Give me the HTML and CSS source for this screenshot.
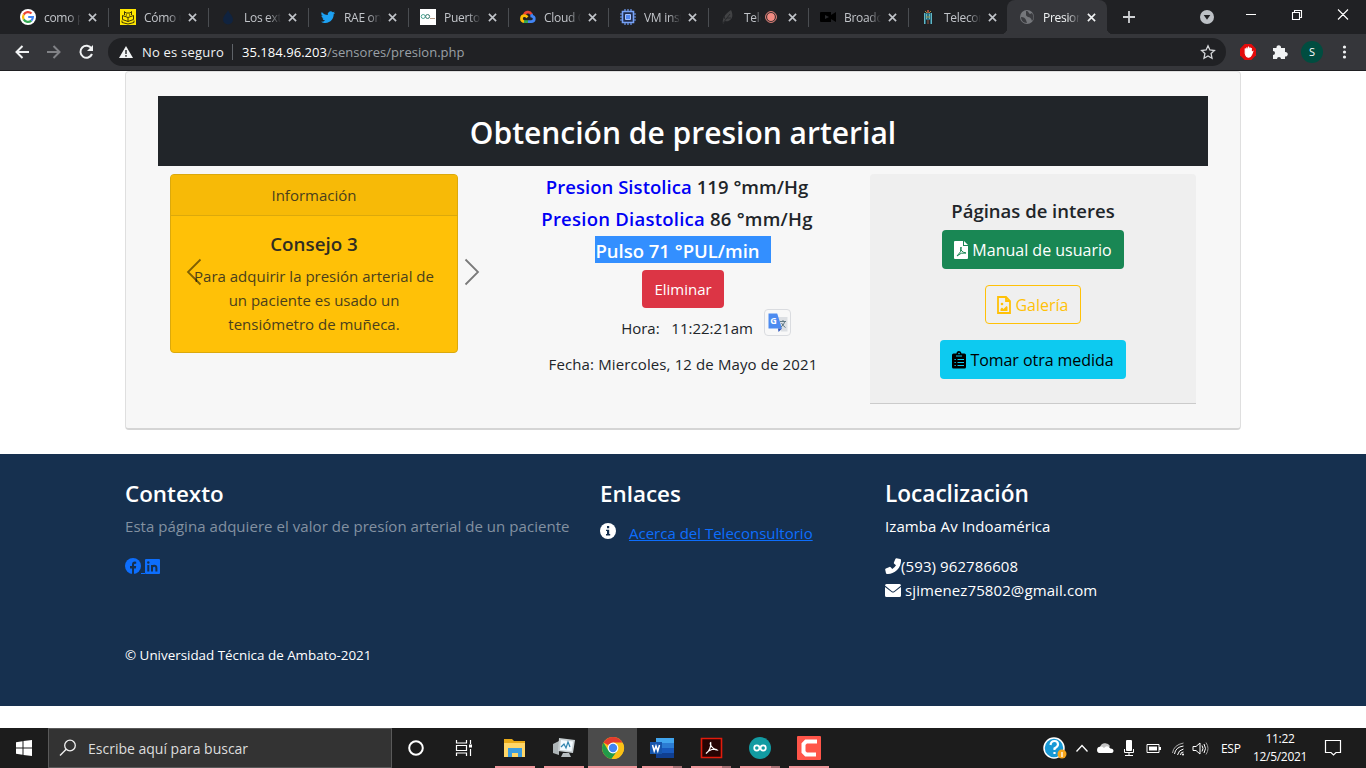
FILE: index.html
```
<!DOCTYPE html>
<html lang="es">
<head>
<meta charset="utf-8">
<title>Presion</title>
<link rel="stylesheet" href="styles.css">
</head>
<body>
<svg class="defs" width="0" height="0">
  <symbol id="x" viewBox="0 0 10 10"><path d="M1 1l8 8M9 1l-8 8" fill="none" stroke="currentColor" stroke-width="1.8"/></symbol>
</svg>
<div class="screen">
<header class="tabs">
  <div class="tab"><svg class="fav" viewBox="0 0 16 16"><circle cx="8" cy="8" r="8" fill="#fff"/><g fill="none" stroke-width="2.2"><path d="M11.5 4.6A4.9 4.9 0 0 0 3.7 5.6" stroke="#ea4335"/><path d="M3.7 5.6a4.9 4.9 0 0 0 0 4.8" stroke="#fbbc05"/><path d="M3.7 10.4a4.9 4.9 0 0 0 7.6 1.2" stroke="#34a853"/><path d="M11.3 11.6A4.9 4.9 0 0 0 12.9 8H8.2" stroke="#4285f4"/></g></svg><span class="label">como p</span><svg class="close"><use href="#x"/></svg></div>
  <div class="tab"><svg class="fav" viewBox="0 0 16 16"><path d="M0 0h16v16H0z" fill="#ffe600"/><path d="M2.500 6.500l5.500 2 5.500-2v4L8 12.500l-5.500-2zM8 8.500v4M2 11.500v2l6 1.500 6-1.500v-2M4.500 6V2.500L6 4h4l1.500-1.500V6M6.300 5.300v1.400M9.700 5.300v1.400" fill="none" stroke="#3a3508" stroke-width="1"/></svg><span class="label">Cómo u</span><svg class="close"><use href="#x"/></svg></div>
  <div class="tab"><svg class="fav" viewBox="0 0 16 16"><path d="M8 1c1 3 5 6 5 9.500a5 5 0 0 1-10 0C3 7 7 4 8 1z" fill="#10233f"/></svg><span class="label">Los ext</span><svg class="close"><use href="#x"/></svg></div>
  <div class="tab"><svg class="fav" viewBox="0 0 24 24"><path d="M22.500 5.600c-.8.400-1.600.6-2.500.7.9-.5 1.600-1.400 1.900-2.400-.8.500-1.800.9-2.800 1.100a4.300 4.300 0 0 0-7.400 4C8.100 8.800 4.900 7.100 2.700 4.400a4.300 4.300 0 0 0 1.400 5.800c-.7 0-1.400-.2-2-.5 0 2.100 1.500 3.900 3.500 4.300-.6.200-1.300.2-2 .1.600 1.700 2.200 2.900 4.100 3A8.700 8.700 0 0 1 1.400 19c1.900 1.200 4.200 1.900 6.700 1.900 8.100 0 12.700-6.800 12.400-12.900.8-.6 1.500-1.400 2-2.400z" fill="#1da1f2"/></svg><span class="label">RAE on</span><svg class="close"><use href="#x"/></svg></div>
  <div class="tab"><svg class="fav" viewBox="0 0 16 16"><path d="M0 0h16v16H0z" fill="#fff"/><circle cx="3.200" cy="7.500" r="2" fill="none" stroke="#4aa593"/><circle cx="7.600" cy="7.500" r="2" fill="none" stroke="#35796c"/><path d="M10 9.500h5" stroke="#b79a83"/></svg><span class="label">Puerto</span><svg class="close"><use href="#x"/></svg></div>
  <div class="tab"><svg class="fav" viewBox="0 0 16 16"><g fill="none" stroke-width="2.800"><path d="M4.300 6.200C5 3 9.500 1.800 11.400 5.300" stroke="#ea4335"/><path d="M11.300 5.200c.6 1 .5 1.400.5 2 3.500.7 3.200 5.400-.6 5.400H8" stroke="#4285f4"/><path d="M8 12.600H3.600" stroke="#34a853"/><path d="M4 12.600c-3.500-.5-3.300-6 .5-5.900 1.500 0 2 .5 3 1.500" stroke="#fbbc05"/></g></svg><span class="label">Cloud C</span><svg class="close"><use href="#x"/></svg></div>
  <div class="tab"><svg class="fav" viewBox="0 0 16 16"><path d="M5 0v16M8 0v16M11 0v16M0 5h16M0 8h16M0 11h16" stroke="#6d99f0" stroke-width="1.200"/><path d="M2.500 2.500h11v11h-11z" fill="#202c4c" stroke="#77a2f7" stroke-width="1.600"/><path d="M5.500 5.500h5v5h-5z" fill="#5286ee" stroke="#a6c3ff"/></svg><span class="label">VM inst</span><svg class="close"><use href="#x"/></svg></div>
  <div class="tab"><svg class="fav" viewBox="0 0 16 16"><path d="M3 15c-1-5 1-9 8-14 2 4 2 8-1 10-2 2-4 1-5 1z" fill="#414244"/><path d="M3 14l7-9M5 10l-1-3M7 9h4" stroke="#28292c"/></svg><span class="label label-short">Tele</span><svg class="rec" viewBox="0 0 12 12"><circle cx="6" cy="6" r="5.400" fill="none" stroke="#f28b82"/><circle cx="6" cy="6" r="3.900" fill="#f28b82"/></svg><svg class="close"><use href="#x"/></svg></div>
  <div class="tab"><svg class="fav" viewBox="0 0 16 16"><path d="M0 4q0-1 1-1h10v3l5-3v10l-5-3v3H1q-1 0-1-1z" fill="#000"/><path d="M5 6l4 2-4 2z" fill="#292a2d"/></svg><span class="label">Broadca</span><svg class="close"><use href="#x"/></svg></div>
  <div class="tab last"><svg class="fav" viewBox="0 0 16 16"><path d="M4 4h8v11h-2v-4H6v4H4z" fill="#2e6f80"/><path d="M4.500 4v11M11.500 4v11M6.500 5v5M9.500 5v5" stroke="#62b7c5"/><path d="M7 1h2v3H7z" fill="#9b4d3b"/><path d="M5 2l2 2M11 2L9 4M6 8h4" stroke="#a5923f"/><path d="M7 11h2v4H7z" fill="#5a3e35"/></svg><span class="label">Telecon</span><svg class="close"><use href="#x"/></svg></div>
  <div class="tab active"><svg class="fav" viewBox="0 0 16 16"><circle cx="8" cy="8" r="7" fill="#75777b"/><path d="M7 2c3 0 2 2 4 3l2-1c2 3 2 6 0 8-1-3-2-4-4-4-1-1-2-1-2-2zM2 8c3 0 4 1 5 3l1 3C4 14 2 11 2 8z" fill="#3b3c40"/></svg><span class="label">Presion</span><svg class="close"><use href="#x"/></svg></div>
  <svg class="plus" viewBox="0 0 12 12"><path d="M6 0v12M0 6h12" stroke="#cfd1d4" stroke-width="1.800"/></svg>
  <svg class="drop" viewBox="0 0 14 14"><circle cx="7" cy="7" r="7" fill="#bdc1c6"/><path d="M3.700 5h6.600L7 9.700z" fill="#202124"/></svg>
  <svg class="winbtns" viewBox="0 0 110 20"><path d="M5 10.500h10M51.500 8.500h7v7h-7zM53.500 8.500v-2h7v7h-2M97 5.500l10 10M107 5.500l-10 10" fill="none" stroke="#fff" stroke-width="1.100"/></svg>
</header>
<div class="toolbar">
  <svg class="nav" viewBox="0 0 100 28"><g fill="none" stroke-width="2"><path d="M29 14H16.500M22.500 8l-6 6 6 6" stroke="#f1f3f4"/><path d="M47 14h12.500M53.500 8l6 6-6 6" stroke="#818286"/><path d="M91.500 10.500a6 6 0 1 0 .5 5.500" stroke="#f1f3f4"/></g><path d="M93 7v6h-6z" fill="#f1f3f4"/></svg>
  <div class="omnibox">
    <svg class="warn" viewBox="0 0 14 12"><path d="M7 0l7 12H0z" fill="#f1f3f4"/><path d="M7 4v4M7 9v1.800" stroke="#202124" stroke-width="1.400"/></svg>
    <span class="unsafe">No es seguro</span><i></i><span class="url"><b>35.184.96.203</b>/sensores/presion.php</span>
    <svg class="star" viewBox="0 0 16 16"><path d="M8 1.800l1.900 4.200 4.500.5-3.300 3.100.9 4.600-4-2.300-4 2.300.9-4.600-3.300-3.100 4.500-.5z" fill="none" stroke="#d5d7da" stroke-width="1.300"/></svg>
  </div>
  <svg class="ext" viewBox="0 0 140 28"><path d="M18.700 6h6.600l4.700 4.700v6.600L25.300 22h-6.600L14 17.300v-6.600z" fill="#e30b0b"/><path d="M19.200 10.500v5q.8 3.800 3.500 3.800 1.800 0 3-2.700l1-2.800-1.400.8V10M20.900 14.500V9.300M22.500 14V8.600M24 14V9.300" fill="#fff" stroke="#fff" stroke-width="1.100"/><path d="M47 10h3.500a2.300 2.300 0 1 1 4.500 0h4v4a2.300 2.300 0 1 1 0 4.500V21h-4a2 2 0 0 0-4 0h-4v-4a2 2 0 0 0 0-4z" fill="#f1f3f4"/><circle cx="86" cy="14" r="11" fill="#004d40"/><text x="86" y="18" text-anchor="middle" fill="#fff" font-size="11">S</text><g fill="#f1f3f4"><circle cx="118.500" cy="9" r="1.600"/><circle cx="118.500" cy="14" r="1.600"/><circle cx="118.500" cy="19" r="1.600"/></g></svg>
</div>

<main class="page">
  <section class="panel">
    <h2>Obtención de presion arterial</h2>
    <div class="row">
      <div class="col carousel">
        <article class="tip">
          <div class="tip-head">Información</div>
          <div class="tip-body"><h5 class="tip-title">Consejo 3</h5><p>Para adquirir la presión arterial de<br>un paciente es usado un<br>tensiómetro de muñeca.</p></div>
        </article>
        <svg class="prev" viewBox="0 0 16 28"><path d="M14.500 1.500L2 14l12.500 12.500" fill="none" stroke="#000" stroke-width="1.800"/></svg>
        <svg class="next" viewBox="0 0 16 28"><path d="M1.500 1.500L14 14 1.500 26.500" fill="none" stroke="#000" stroke-width="1.800"/></svg>
      </div>
      <div class="col readings">
        <h5 class="sis"><span>Presion Sistolica</span> 119 °mm/Hg</h5>
        <h5 class="dia"><span>Presion Diastolica</span> 86 °mm/Hg</h5>
        <h5 class="pul"><mark>Pulso 71 °PUL/min</mark></h5>
        <a class="btn red"><span>Eliminar</span></a>
        <p class="hora">Hora:&nbsp;&nbsp; 11:22:21am</p>
        <p class="fecha">Fecha: Miercoles, 12 de Mayo de 2021</p>
        <div class="gt"><svg viewBox="0 0 20 20"><path d="M9 4h10.500v14.500H13z" fill="#dcdfe3"/><path d="M.5.500h8.700L14 15.500H.5z" fill="#4d8bf0"/><path d="M10 15.500h4l-3.500 3.500z" fill="#2f56be"/><text x="2.300" y="10.500" font-size="9" font-weight="700" fill="#fff">G</text><path d="M12 8.500h6M15 7v1.500M16.800 8.500q-1 4-4 5.500M13.500 10q1.500 3 4 4.500" stroke="#607985" fill="none"/></svg></div>
      </div>
      <div class="col">
        <aside class="links">
          <h5>Páginas de interes</h5>
          <a class="btn green"><svg viewBox="0 0 14 18"><path d="M1 0h8v5h5v12q0 1-1 1H1q-1 0-1-1V1q0-1 1-1zM10 0l4 4h-4z" fill="#fff"/><path d="M3 15q5-4 4-9-1 5 5 6-5-1-9 3z" fill="none" stroke="#198754"/></svg><span>Manual de usuario</span></a>
          <a class="btn outline"><svg viewBox="0 0 14 18"><path d="M1 1h8l4 4v12H1zM9 1v4h4" fill="none" stroke="#ffc107" stroke-width="1.800"/><path d="M3.500 15v-2l1.500-1.500 1.500 1.500L9.500 10l1 1v4z" fill="#ffc107"/><circle cx="5" cy="8" r="1.300" fill="#ffc107"/></svg><span>Galería</span></a>
          <a class="btn cyan"><svg viewBox="0 0 14 18"><path d="M1.500 2.500h3a2.500 2.500 0 0 1 5 0h3Q14 2.500 14 4v12q0 1.500-1.500 1.500h-11Q0 17.500 0 16V4q0-1.500 1.500-1.500z" fill="#000"/><path d="M4 5h6M2.500 8.500h1.300M5.500 8.500H12M2.500 11.500h1.300M5.500 11.500H12M2.500 14.500h1.300M5.500 14.500H12" stroke="#0dcaf0"/><circle cx="7" cy="2.500" r=".8" fill="#0dcaf0"/></svg><span>Tomar otra medida</span></a>
        </aside>
      </div>
    </div>
  </section>
  <footer class="foot">
    <div class="fgrid">
      <div><h4>Contexto</h4><p class="ctx">Esta página adquiere el valor de presíon arterial de un paciente</p>
        <div class="social"><svg viewBox="0 0 16 16"><circle cx="8" cy="8" r="8" fill="#0d6efd"/><path d="M7 16v-5.500H5V8h2V6.500q0-3 2.800-3 .8 0 1.400.2v2H10q-1 0-1 1.100V8h2.200l-.4 2.500H9V16z" fill="#16304f"/></svg><i></i><svg class="in" viewBox="0 0 15 15"><rect width="15" height="15" rx="1" fill="#0d6efd"/><path d="M3.300 6v6.500M7 12.500V6M7 9q0-2.200 2.200-2.200T11.400 9v3.500" fill="none" stroke="#16304f" stroke-width="2"/><circle cx="3.300" cy="3.500" r="1.200" fill="#16304f"/></svg></div></div>
      <div><h4>Enlaces</h4><div class="about"><svg viewBox="0 0 16 16"><circle cx="8" cy="8" r="8" fill="#fff"/><path d="M7 3h2.200v2.200H7zM6 6.700h3.200V11h1v1.400H6V11h1V8H6z" fill="#16304f"/></svg><a>Acerca del Teleconsultorio</a></div></div>
      <div><h4 class="loc">Locaclización</h4><p class="addr">Izamba Av Indoamérica</p>
        <div class="contact"><svg viewBox="0 0 16 16"><path d="M11.500.2l3.700.8q.8.200.8 1A13.500 13.500 0 0 1 2 16q-.8 0-1-.8l-.8-3.500q-.1-.8.6-1.200l3.700-1.600q.7-.2 1.200.3L7.300 11A11 11 0 0 0 11 7.300L9.200 5.700q-.5-.5-.3-1.200L10.500.8q.3-.7 1-.6z" fill="#fff"/></svg><span>(593) 962786608</span></div>
        <div class="contact"><svg class="mail" viewBox="0 0 16 13"><path d="M1.500 0h13Q16 0 16 1.500L9 7.200q-1 .7-2 0L0 1.500Q0 0 1.500 0zM0 3l6.500 5q1.500 1 3 0L16 3v8.500q0 1.500-1.500 1.500h-13Q0 13 0 11.500z" fill="#fff"/></svg><span>sjimenez75802@gmail.com</span></div></div>
    </div>
    <p class="copy">© Universidad Técnica de Ambato-2021</p>
  </footer>
</main>

<nav class="taskbar">
  <div class="start"><svg width="16" height="16" viewBox="0 0 16 16"><path d="M0 2.300L6.500 1.300v6.200H0zM7.500 1.100L16 0v7.500H7.500zM0 8.500h6.500v6.200L0 13.800zM7.500 8.500H16V16l-8.500-1.100z" fill="#fff"/></svg></div>
  <div class="search"><svg width="18" height="18" viewBox="0 0 18 18"><circle cx="11" cy="6.500" r="5.300" fill="none" stroke="#f0f0f0" stroke-width="1.300"/><path d="M7.200 10.300L1 16.500" stroke="#f0f0f0" stroke-width="1.400"/></svg><span>Escribe aquí para buscar</span></div>
  <div class="app narrow"><svg viewBox="0 0 24 24"><circle cx="12" cy="12" r="6.800" fill="none" stroke="#fff" stroke-width="2"/></svg></div>
  <div class="app narrow views"><svg viewBox="0 0 24 24"><path d="M4.500 4v3h10V4M4.500 20v-3h10v3M4.500 9.500h10v5h-10zM18.500 4v4M18.500 13v7" fill="none" stroke="#fff" stroke-width="1.200"/><path d="M17 8.500h3v3h-3z" fill="#fff"/></svg></div>
  <div class="app run"><svg viewBox="0 0 24 24"><path d="M1 3h8l2 2h11v16H1z" fill="#e8a917"/><path d="M1 7h21v14H1z" fill="#ffd667"/><path d="M5 12h14v9h-4v-4H9v4H5z" fill="#3b9cde"/></svg></div>
  <div class="app run"><svg viewBox="0 0 24 24"><path d="M1 8l6-3v14l-6-2z" fill="#aeb5b7"/><path d="M7 2l16 2-2 13-15-2z" fill="#c9d0d3"/><path d="M9 4l12 1.500-1.500 9.500-11.500-1z" fill="#f4fbff"/><path d="M9 11l3-3 2 4 2-6 2 5" fill="none" stroke="#2f83ae" stroke-width="1.200"/><path d="M11 17h6l2 4H9z" fill="#b8bec1"/></svg></div>
  <div class="app run current"><svg viewBox="0 0 24 24"><circle cx="12" cy="12" r="11" fill="#fbc116"/><path d="M12 12L2.500 6.500A11 11 0 0 1 21.500 6.500H12z" fill="#e33b2e"/><path d="M2.500 6.500a11 11 0 0 0 8 16.400L17 14H7z" fill="#229b49"/><path d="M12 7h9.800a11 11 0 0 1-11.300 15.900L17 14z" fill="#fbc116"/><circle cx="12" cy="12" r="5.400" fill="#fff"/><circle cx="12" cy="12" r="4.200" fill="#4285f4"/></svg></div>
  <div class="app run split"><svg viewBox="0 0 24 24"><path d="M6 2h18v6H6z" fill="#41a5ee"/><path d="M6 7h18v5H6z" fill="#2b7cd3"/><path d="M6 12h18v5H6z" fill="#185abd"/><path d="M6 17h18v5H6z" fill="#103f91"/><path d="M0 6h12v12H0z" fill="#1656ad"/><path d="M2.500 9l1.700 6L6 10l1.800 5 1.700-6" fill="none" stroke="#fff" stroke-width="1.500"/></svg></div>
  <div class="app run split"><svg viewBox="0 0 24 24"><path d="M2.500 2.500h20v19h-20z" fill="#260303" stroke="#e11b0c" stroke-width="1.600"/><path d="M7 17.500c3-2 5.500-7 4.700-11-1.700.5 1.300 7 6.300 7.500-2-2-8-.5-11 3.500z" fill="none" stroke="#fff" stroke-width="1.200"/></svg></div>
  <div class="app run split"><svg viewBox="0 0 24 24"><circle cx="12" cy="12" r="11" fill="#129ba2"/><g fill="none" stroke="#fff" stroke-width="1.700"><circle cx="8.800" cy="12" r="2.600"/><circle cx="15.200" cy="12" r="2.600"/></g></svg></div>
  <div class="app run"><svg viewBox="0 0 24 24"><rect width="24" height="24" rx="1" fill="#ff5549"/><path d="M20 5.500H9L6.500 8v8L9 18.500h10" fill="none" stroke="#fff" stroke-width="4"/></svg></div>
  <div class="tray">
    <svg width="176" height="40" viewBox="0 0 176 40"><circle cx="13" cy="20" r="10" fill="#1899d6" stroke="#fff" stroke-width="1.500"/><path d="M9.500 17q.5-4 4-4t3.500 3.500q0 2-3.500 4V22M13.500 24v2" fill="none" stroke="#fff" stroke-width="2.200"/><circle cx="21" cy="26" r="4.500" fill="#f6a51c"/><path d="M21 24v5" stroke="#fff" stroke-width="1.300"/><path d="M35.500 23.500l5.500-6 5.500 6" fill="none" stroke="#fff" stroke-width="1.300"/><g transform="translate(-1)"><path d="M60 19a5.500 5.500 0 0 1 10-1l-4 5z" fill="#c4c4c4"/><path d="M59.500 25a3.200 3.200 0 0 1 .5-6.300q2-.5 4 1.300 3-3.500 6.500.5 3 .3 3 2.500t-2.500 2z" fill="#fff"/></g><g transform="translate(-1)"><rect x="86" y="12" width="6" height="11" rx="1" fill="#fff"/><path d="M84.500 21v3.500h9V21M89 24v3M85 27.500h8" fill="none" stroke="#fff"/></g><g transform="translate(-1)"><path d="M107 16.500h12v8h-12z" fill="none" stroke="#fff"/><path d="M109 18.500h8v4h-8zM119 19h2v3h-2z" fill="#fff"/></g><g transform="translate(-1.500)" fill="none" stroke="#fff"><path d="M133 25q1-8 11-10" stroke="#aaa"/><path d="M135 26q1-7 9-8M138 27q1-5 6-6M141 27q0-3 3-3"/><path d="M153.500 18.500h3l4-3.500v11l-4-3.500h-3zM162.500 17.500q2 3 0 6M164.500 16q3 4.500 0 9"/><path d="M166.500 14.500q4 6 0 12" stroke="#999"/></g><circle cx="142" cy="26.500" r="1" fill="#fff"/></svg>
    <span class="lang">ESP</span>
    <div class="clock"><span>11:22</span><span>12/5/2021</span></div>
    <svg class="note" width="18" height="18" viewBox="0 0 18 18"><path d="M1.500 1.500h15v12H12l-2.500 2.500L7 13.500H1.500z" fill="none" stroke="#fff" stroke-width="1.200"/></svg>
  </div>
</nav>
</div>
</body>
</html>
```
FILE: styles.css
```
* { box-sizing: border-box; }
body { margin: 0; font-family: "Open Sans", "Noto Sans", sans-serif; font-size: 15px; color: #212529; background: #fff; }
h2, h4, h5, p { margin: 0; white-space: nowrap; }
svg { display: block; flex: none; }
.defs { position: absolute; }
.screen { width: 1366px; height: 768px; overflow: hidden; display: flex; flex-direction: column; }

.tabs { height: 34px; background: #202124; display: flex; align-items: center; padding-left: 8px; flex: none; }
.tab { width: 100px; height: 34px; display: flex; align-items: center; padding: 0 11px 0 12px; flex: none; position: relative; color: #c2c5ca; font-size: 12px; letter-spacing: -.3px; }
.tab::after { content: ""; position: absolute; right: -1px; top: 8px; height: 19px; width: 1px; background: #4a4d51; }
.tab.last::after, .tab.active::after { display: none; }
.fav { width: 16px; height: 16px; margin-right: 8px; }
.label { width: 37px; height: 17px; line-height: 17px; overflow: hidden; white-space: nowrap; -webkit-mask-image: linear-gradient(90deg, #000 65%, transparent); mask-image: linear-gradient(90deg, #000 65%, transparent); }
.label-short { width: 17px; }
.rec { width: 12px; height: 12px; margin-left: 4px; margin-right: 5px; }
.close { width: 9px; height: 9px; margin-left: auto; }
.active { background: #35363a; color: #f1f3f4; border-radius: 8px 8px 0 0; margin-left: -1px; }
.active::before { content: ""; position: absolute; left: -6px; right: -6px; bottom: 0; height: 6px; background: radial-gradient(circle at 0 0, transparent 6px, #35363a 6.500px) 0 0/6px 6px no-repeat, radial-gradient(circle at 100% 0, transparent 6px, #35363a 6.500px) 100% 0/6px 6px no-repeat; }
.plus { width: 12px; height: 12px; margin-left: 16px; }
.drop { width: 14px; height: 14px; margin-left: 65px; }
.winbtns { width: 110px; height: 20px; margin: -7px 0 0 27px; }

.toolbar { height: 37px; background: #35363a; border-bottom: 1px solid #1f1f22; display: flex; align-items: center; flex: none; }
.nav { width: 100px; height: 28px; margin-right: 8px; }
.omnibox { width: 1118px; height: 28px; border-radius: 14px; background: #202124; display: flex; align-items: center; padding: 0 10px 0 11px; font-size: 13px; color: #f1f3f4; white-space: nowrap; }
.warn { width: 14px; height: 12px; margin-right: 9px; }
.unsafe { width: 90px; letter-spacing: .2px; }
.omnibox i { width: 1px; height: 16px; background: #5f6368; margin-right: 9px; }
.url { color: #9aa0a6; letter-spacing: .03px; }
.url b { font-weight: 400; color: #fff; }
.star { width: 16px; height: 16px; margin-left: auto; }
.ext { width: 140px; height: 28px; }

.page { height: 657px; background: #fff; flex: none; }
.panel { width: 1116px; height: 359px; margin: 0 auto 24px; background: #f7f7f7; border: 1px solid #dfdfdf; border-bottom: 2px solid #d5d5d5; border-radius: 4px; padding: 24px 32px 0; }
.panel h2 { height: 70px; line-height: 74px; background: #212529; color: #fff; text-align: center; font-size: 30px; font-weight: 600; }
.row { display: grid; grid-template-columns: repeat(3, 350px); padding-top: 8px; }
.col { padding: 0 12px; position: relative; text-align: center; }
h5 { font-size: 18.500px; font-weight: 600; line-height: 24px; margin-bottom: 8px; }
.tip { width: 288px; height: 179px; border: 1px solid #dba90c; border-radius: 4px; background: #ffc107; color: #4a3f1c; overflow: hidden; }
.tip-head { height: 41px; line-height: 40px; background: #f7ba07; border-bottom: 1px solid #dba90c; }
.tip-body { padding-top: 16px; line-height: 24px; }
.tip-title { color: #302d22; font-size: 18.800px; }
.prev, .next { position: absolute; width: 16px; height: 28px; top: 84px; opacity: .5; }
.prev { left: 28px; }
.next { left: 306px; }
.readings h5 { height: 24px; }
.sis, .dia { padding-right: 12px; line-height: 26px; letter-spacing: .05px; }
.dia { letter-spacing: .24px; }
.readings h5 span { color: #0000f5; }
.pul mark { display: inline-block; height: 27px; line-height: 29px; margin-top: -2px; padding-right: 11px; background: #338fff; color: #fff; vertical-align: top; }
.btn { display: flex; align-items: center; justify-content: center; height: 39px; border-radius: 4px; margin: 0 auto; white-space: nowrap; }
.red { width: 82px; height: 38px; background: #dc3545; color: #fff; }
.hora { line-height: 24px; margin: 8px 0 12px; padding-left: 8px; }
.fecha { line-height: 24px; letter-spacing: .12px; }
.gt { position: absolute; left: 256px; top: 135px; width: 27px; height: 27px; background: #f8f8f8; border: 1px solid #dadce0; border-radius: 4px; padding: 2px; }
.gt svg { width: 20px; height: 20px; margin-top: 1px; margin-left: 1px; }
.links { height: 230px; background: #efefef; border-bottom: 1px solid #cbcbcb; border-radius: 4px 4px 0 0; padding-top: 25px; }
.links h5 { margin-bottom: 7px; line-height: 24px; height: 24px; }
.links .btn { margin-bottom: 16px; gap: 4px; font-size: 16px; }
.btn svg { width: 14px; height: 18px; }
.green { width: 182px; background: #198754; color: #fff; }
.outline { width: 96px; border: 1px solid #ffc107; color: #ffc107; }
.cyan { width: 186px; background: #0dcaf0; color: #000; }
.links .cyan { letter-spacing: -.06px; }

.foot { height: 252px; background: #16304f; color: #fff; padding: 24px 125px 0; }
.fgrid { display: grid; grid-template-columns: 475px 285px 1fr; height: 165px; }
h4 { font-size: 22.400px; font-weight: 600; line-height: 32px; height: 36px; }
.loc { font-size: 22.600px; }
.ctx { color: #8391a1; letter-spacing: .05px; }
.ctx, .addr { line-height: 24px; margin-bottom: 16px; }
.addr, .contact { letter-spacing: .1px; }
.social { display: flex; height: 24px; align-items: center; }
.social svg { width: 16px; height: 16px; }
.social .in { width: 15px; height: 15px; }
.social i { width: 4px; height: 1px; background: #0d6efd; margin-top: 15px; }
.about { display: flex; gap: 13px; height: 34px; align-items: center; }
.about svg { width: 16px; height: 16px; }
.about a { color: #0d6efd; text-decoration: underline; margin-top: 4px; white-space: nowrap; }
.contact { display: flex; align-items: center; height: 24px; }
.contact svg { width: 16px; height: 16px; }
.contact .mail { height: 13px; margin-right: 4px; }
.copy { font-size: 13.400px; line-height: 24px; }

.taskbar { height: 40px; background: #1c1c1c; display: flex; align-items: center; flex: none; color: #fff; }
.start { width: 48px; display: flex; justify-content: center; }
.search { width: 344px; height: 40px; background: #333; border: 1px solid #595959; display: flex; align-items: center; padding-left: 10px; gap: 11px; font-size: 14px; color: #ddd; }
.app { width: 49px; height: 40px; display: flex; align-items: center; justify-content: center; position: relative; flex: none; }
.narrow { width: 48px; }
.views { margin-right: 2px; }
.app svg { width: 24px; height: 24px; }
.run::after { content: ""; position: absolute; left: 5px; width: 40px; bottom: 0; height: 2px; background: #ef969b; }
.current { background: #4b4b4b; }
.current::after { left: 0; width: 49px; }
.split::after { background: linear-gradient(90deg, #ef969b 31px, #a87074 31px); }
.tray { margin-left: auto; display: flex; align-items: center; height: 40px; font-size: 12px; letter-spacing: -.3px; }
.lang { width: 20px; margin-left: 4px; }
.clock { width: 54px; margin-left: 12px; display: flex; flex-direction: column; align-items: center; line-height: 18px; }
.note { margin: 0 24px 0 17px; }
```
